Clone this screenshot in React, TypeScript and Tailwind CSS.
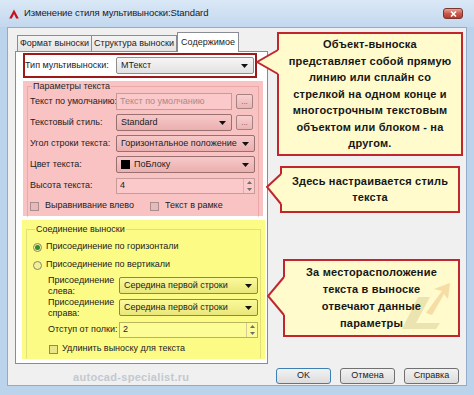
import type { ReactNode } from "react";

type Tone = "white" | "pink" | "yellow";

const selectTone: Record<Tone, string> = {
  white: "border-[#8f8f8f] bg-gradient-to-b from-[#f6f6f6] to-[#e2e2e2]",
  pink: "border-[#9a6f6f] bg-gradient-to-b from-[#f7c8c8] to-[#eab0b0]",
  yellow: "border-[#8c8a3c] bg-gradient-to-b from-[#fbfa9a] to-[#e9e67a]"
};

const inputTone: Record<Tone, string> = {
  white: "border-[#a8a8a8] bg-white",
  pink: "border-[#c99a9a] bg-[#fbc9c9]",
  yellow: "border-[#b8b65c] bg-[#fdfd98]"
};

function DownArrow() {
  return (
    <svg width="7" height="4" viewBox="0 0 7 4" className="shrink-0">
      <path d="M0 0h7L3.5 4z" fill="#111" />
    </svg>
  );
}

function Select({
  children,
  tone,
  className
}: {
  children: ReactNode;
  tone: Tone;
  className: string;
}) {
  return (
    <div
      className={`flex h-[17px] items-center rounded-[2px] border pl-[4px] pr-[5px] ${selectTone[tone]} ${className}`}
    >
      <div className="flex flex-1 items-center gap-[4px] overflow-hidden whitespace-nowrap">{children}</div>
      <DownArrow />
    </div>
  );
}

function Spin({ value, tone, className }: { value: string; tone: Tone; className: string }) {
  return (
    <div className={`flex h-[16px] items-center border pl-[3px] ${inputTone[tone]} ${className}`}>
      <span className="flex-1">{value}</span>
      <div className="flex h-full w-[11px] flex-col border-l border-[#b49a9a]/50">
        <div className="flex flex-1 items-center justify-center">
          <svg width="5" height="3" viewBox="0 0 5 3">
            <path d="M0 3h5L2.5 0z" fill="#6d6d6d" />
          </svg>
        </div>
        <div className="flex flex-1 items-center justify-center">
          <svg width="5" height="3" viewBox="0 0 5 3">
            <path d="M0 0h5L2.5 3z" fill="#6d6d6d" />
          </svg>
        </div>
      </div>
    </div>
  );
}

function DotsButton() {
  return (
    <div className="ml-[4px] flex h-[15px] w-[17px] items-center justify-center rounded-[2px] border border-[#a68383] bg-gradient-to-b from-[#f8d0d0] to-[#ebb4b4] text-[8px] leading-none text-[#6b5555]">
      ...
    </div>
  );
}

function Checkbox({ tone }: { tone: Tone }) {
  return (
    <div
      className={`h-[9px] w-[9px] shrink-0 border ${
        tone === "pink" ? "border-[#a78d8d] bg-[#e8b9b9]" : "border-[#8e8d55] bg-[#e9e78a]"
      }`}
    />
  );
}

function Radio({ checked }: { checked?: boolean }) {
  return (
    <div className="flex h-[9px] w-[9px] shrink-0 items-center justify-center rounded-full border border-[#8b8a57] bg-[#f1ef9c]">
      {checked ? <div className="h-[5px] w-[5px] rounded-full bg-[#2f8c2f]" /> : null}
    </div>
  );
}

type CalloutProps = {
  children: ReactNode;
  className: string;
  pointerClass: string;
  tipX: number;
  tipY: number;
  baseTop: number;
  baseBottom: number;
  height: number;
  extra?: ReactNode;
};

function Callout({
  children,
  className,
  pointerClass,
  tipX,
  tipY,
  baseTop,
  baseBottom,
  height,
  extra
}: CalloutProps) {
  const x = tipX + 1;
  return (
    <div
      className={`relative flex shrink-0 items-center justify-center border-2 border-[#c0262d] bg-[#fffbcd] text-center font-['Liberation_Sans',Arial,sans-serif] text-[11px] font-bold tracking-[0.2px] text-[#161616] ${className}`}
    >
      <svg width={tipX + 4} height={height} className={`absolute top-[-2px] ${pointerClass}`}>
        <polygon
          points={`${x},${baseTop} 1,${tipY} ${x},${baseBottom} ${x + 3},${baseBottom} ${x + 3},${baseTop}`}
          fill="#fffbcd"
        />
        <polyline
          points={`${x},${baseTop} 1,${tipY} ${x},${baseBottom}`}
          fill="none"
          stroke="#c0262d"
          strokeWidth="2"
        />
      </svg>
      {extra}
      <div className="relative whitespace-nowrap">{children}</div>
    </div>
  );
}

function AcadIcon() {
  return (
    <svg width="10" height="10" viewBox="0 0 10 10" className="shrink-0">
      <path d="M5 0.5L9.8 9.5H7.2L5 5L2.8 9.5H0.2z" fill="#c8101c" />
    </svg>
  );
}

const label = "shrink-0 whitespace-nowrap";

export default function App() {
  return (
    <div className="flex h-[395px] w-[474px] flex-col overflow-hidden bg-[#bcd3ec] font-['Liberation_Sans',Arial,sans-serif] text-[9px] text-[#1c1c1c]">
      <div className="flex h-[27px] shrink-0 items-center bg-gradient-to-b from-[#dae8f6] to-[#c3d8ee] pl-[9px] pr-[11px]">
        <AcadIcon />
        <span className="ml-[5px] whitespace-nowrap text-[9.5px] tracking-[-0.1px] text-[#1a1a1a]">
          Изменение стиля мультивыноски:Standard
        </span>
        <div className="ml-auto flex h-[11px] w-[20px] items-center justify-center rounded-[3px] border border-[#7a3530] bg-gradient-to-b from-[#e5a497] via-[#c95a4c] to-[#b5392b]">
          <svg width="7" height="6" viewBox="0 0 7 6">
            <path d="M1 0.5L6 5.5M6 0.5L1 5.5" stroke="#fff" strokeWidth="1.6" />
          </svg>
        </div>
      </div>

      <div className="mx-[7px] flex h-[359px] shrink-0 flex-col border border-[#93abc6] bg-[#f0f0f0]">
        <div className="flex h-[338px]">
          <div className="w-[262px] shrink-0 pl-[7px] pt-[4px]">
            <div className="flex h-[19px] items-end whitespace-nowrap pl-[2px]">
              <div className="flex h-[16px] w-[75px] items-center justify-center border border-b-0 border-[#898c95] bg-gradient-to-b from-[#f4f4f4] to-[#e4e4e4]">
                Формат выноски
              </div>
              <div className="flex h-[16px] w-[85px] items-center justify-center border border-b-0 border-l-0 border-[#898c95] bg-gradient-to-b from-[#f4f4f4] to-[#e4e4e4]">
                Структура выноски
              </div>
              <div className="relative z-10 mb-[-1px] flex h-[20px] w-[62px] items-center justify-center border border-b-0 border-[#898c95] bg-white">
                Содержимое
              </div>
            </div>

            <div className="h-[313px] w-[253px] border border-[#898c95] bg-white">
              <div className="ml-[7px] mt-[1px] flex h-[25px] w-[234px] items-center border-2 border-[#9e1a1a]">
                <span className={`w-[91px] ${label}`}>Тип мультивыноски:</span>
                <Select tone="white" className="w-[138px]">
                  <span>МТекст</span>
                </Select>
              </div>

              <div className="ml-[7px] mt-[3px] h-[135px] w-[240px] bg-[#f9c3c3] px-[4px]">
                <fieldset className="border border-t-[#eaa9a9] border-r-[#eaa9a9] border-b-transparent border-l-[#eaa9a9] pl-[2px]">
                  <legend className="ml-[2px] px-[1px] leading-[10px] text-[#2a1f1f]">Параметры текста</legend>
                  <div className="flex h-[21px] items-center">
                    <span className={`w-[86px] ${label}`}>Текст по умолчанию:</span>
                    <div className={`flex h-[17px] w-[116px] items-center whitespace-nowrap border pl-[3px] text-[#a68b8b] ${inputTone.pink}`}>
                      Текст по умолчанию
                    </div>
                    <DotsButton />
                  </div>
                  <div className="flex h-[21px] items-center">
                    <span className={`w-[86px] ${label}`}>Текстовый стиль:</span>
                    <Select tone="pink" className="w-[116px]">
                      <span>Standard</span>
                    </Select>
                    <DotsButton />
                  </div>
                  <div className="flex h-[21px] items-center">
                    <span className={`w-[86px] ${label}`}>Угол строки текста:</span>
                    <Select tone="pink" className="w-[139px]">
                      <span>Горизонтальное положение</span>
                    </Select>
                  </div>
                  <div className="flex h-[21px] items-center">
                    <span className={`w-[86px] ${label}`}>Цвет текста:</span>
                    <Select tone="pink" className="w-[139px]">
                      <span className="h-[9px] w-[9px] bg-black" />
                      <span>ПоБлоку</span>
                    </Select>
                  </div>
                  <div className="flex h-[21px] items-center">
                    <span className={`w-[86px] ${label}`}>Высота текста:</span>
                    <Spin value="4" tone="pink" className="w-[139px]" />
                  </div>
                  <div className="flex h-[20px] items-center whitespace-nowrap">
                    <Checkbox tone="pink" />
                    <span className="ml-[6px]">Выравнивание влево</span>
                    <div className="ml-[16px]">
                      <Checkbox tone="pink" />
                    </div>
                    <span className="ml-[6px]">Текст в рамке</span>
                  </div>
                </fieldset>
              </div>

              <div className="ml-[6px] mt-[4px] h-[139px] w-[243px] bg-[#fbfb86] px-[4px] pt-[4px]">
                <fieldset className="border border-t-[#e2e07a] border-r-[#e2e07a] border-b-transparent border-l-[#e2e07a] pl-[6px]">
                  <legend className="ml-[2px] px-[1px] leading-[10px]">Соединение выноски</legend>
                  <div className="mt-[4px] flex h-[18px] items-center whitespace-nowrap">
                    <Radio checked />
                    <span className="ml-[4px]">Присоединение по горизонтали</span>
                  </div>
                  <div className="flex h-[18px] items-center whitespace-nowrap">
                    <Radio />
                    <span className="ml-[4px]">Присоединение по вертикали</span>
                  </div>
                  <div className="mt-[1px] flex h-[21px] items-center pl-[15px]">
                    <span className={`w-[71px] leading-[11px] ${label}`}>
                      Присоединение
                      <br />
                      слева:
                    </span>
                    <Select tone="yellow" className="w-[139px]">
                      <span>Середина первой строки</span>
                    </Select>
                  </div>
                  <div className="mt-[1px] flex h-[21px] items-center pl-[15px]">
                    <span className={`w-[71px] leading-[11px] ${label}`}>
                      Присоединение
                      <br />
                      справа:
                    </span>
                    <Select tone="yellow" className="w-[139px]">
                      <span>Середина первой строки</span>
                    </Select>
                  </div>
                  <div className="mt-[2px] flex h-[20px] items-center pl-[15px]">
                    <span className={`w-[71px] ${label}`}>Отступ от полки:</span>
                    <Spin value="2" tone="yellow" className="w-[139px]" />
                  </div>
                  <div className="flex h-[18px] items-center whitespace-nowrap pl-[16px]">
                    <Checkbox tone="yellow" />
                    <span className="ml-[4px]">Удлинить выноску для текста</span>
                  </div>
                </fieldset>
              </div>
            </div>
          </div>

          <div className="flex flex-1 flex-col">
            <Callout
              className="ml-[7px] mt-[4px] h-[124px] w-[186px] leading-[16.6px]"
              pointerClass="left-[-23px]"
              tipX={21}
              tipY={30}
              baseTop={18}
              baseBottom={42}
              height={124}
            >
              Объект-выноска
              <br />
              представляет собой прямую
              <br />
              линию или сплайн со
              <br />
              стрелкой на одном конце и
              <br />
              многострочным текстовым
              <br />
              объектом или блоком - на
              <br />
              другом.
            </Callout>
            <Callout
              className="ml-[10px] mt-[10px] h-[47px] w-[180px] leading-[15.5px]"
              pointerClass="left-[-16px]"
              tipX={14}
              tipY={21}
              baseTop={8}
              baseBottom={38}
              height={47}
            >
              Здесь настраивается стиль
              <br />
              текста
            </Callout>
            <Callout
              className="ml-[13px] mt-[46px] h-[78px] w-[177px] leading-[17px]"
              pointerClass="left-[-18px]"
              tipX={16}
              tipY={37}
              baseTop={18}
              baseBottom={56}
              height={78}
              extra={
                <svg width="56" height="48" viewBox="0 0 56 48" className="absolute bottom-[4px] right-[6px] opacity-50">
                  <polygon points="6,46 22,14 34,14 20,40 44,40 40,46" fill="#d9cf96" />
                  <polygon points="30,30 46,8 38,6 54,0 52,16 48,11 36,32" fill="#eebf7e" />
                </svg>
              }
            >
              За месторасположение
              <br />
              текста в выноске
              <br />
              отвечают данные
              <br />
              параметры
            </Callout>
          </div>
        </div>

        <div className="flex flex-1 items-start pr-[7px] pt-[2px]">
          <span className="ml-[65px] mt-[1px] whitespace-nowrap text-[11px] font-bold tracking-[0.3px] text-[#c3c8cf]">
            autocad-specialist.ru
          </span>
          <div className="ml-auto flex gap-[9px]">
            <div className="flex h-[16px] w-[55px] items-center justify-center rounded-[3px] border border-[#3c7fb1] bg-gradient-to-b from-[#f2f2f2] to-[#dcdcdc]">
              OK
            </div>
            <div className="flex h-[16px] w-[55px] items-center justify-center rounded-[3px] border border-[#707070] bg-gradient-to-b from-[#f2f2f2] to-[#dcdcdc]">
              Отмена
            </div>
            <div className="flex h-[16px] w-[55px] items-center justify-center rounded-[3px] border border-[#707070] bg-gradient-to-b from-[#f2f2f2] to-[#dcdcdc]">
              Справка
            </div>
          </div>
        </div>
      </div>
    </div>
  );
}
